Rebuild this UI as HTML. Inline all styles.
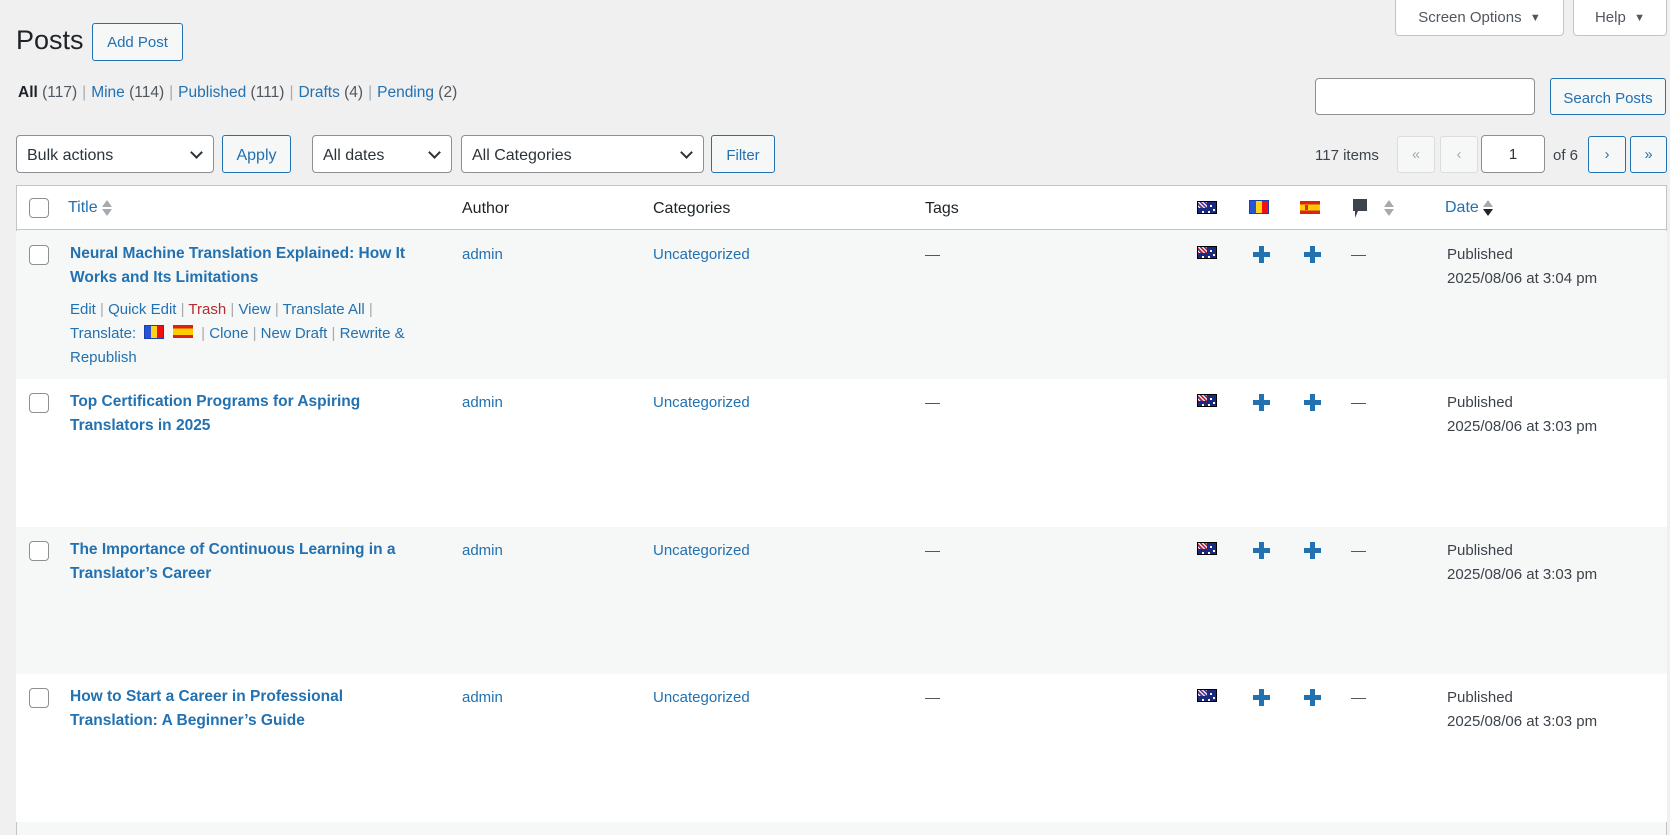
<!DOCTYPE html>
<html><head><meta charset="utf-8"><style>
*{box-sizing:border-box;margin:0;padding:0}
body{width:1670px;height:835px;overflow:hidden;background:#f0f0f1;font-family:"Liberation Sans",sans-serif;font-size:14px;color:#3c434a;position:relative}
.a{position:absolute;white-space:nowrap}
a,.l{color:#2271b1;text-decoration:none}
.btn{position:absolute;border:1px solid #2271b1;color:#2271b1;background:#f6f7f7;border-radius:3px;display:flex;align-items:center;justify-content:center;font-size:14.5px}
.sel{position:absolute;border:1px solid #8c8f94;background:#fff;border-radius:4px;font-size:16px;color:#2c3338;padding-left:10px;padding-top:3px;display:flex;align-items:center}
.sel:after{content:"";position:absolute;right:12px;top:12px;width:7px;height:7px;border-right:2px solid #2c3338;border-bottom:2px solid #2c3338;transform:rotate(45deg)}
.cb{position:absolute;width:20px;height:20px;border:1px solid #8c8f94;border-radius:4px;background:#fff}
.row{position:absolute;left:16px;width:1651px;height:148px}
.au{position:absolute;width:20px;height:13px;background:#1a2a80;border:1px solid #000}
.au:before{content:"";position:absolute;left:0;top:0;width:9px;height:6px;background:repeating-linear-gradient(45deg,#c33 0 1px,#fff 1px 2px,#24b 2px 3px)}
.au:after{content:"";position:absolute;left:12px;top:3px;width:2px;height:2px;background:#fff;box-shadow:3px 4px 0 #fff,-2px 6px 0 #fff,-8px 6px 0 #fff}
.ro{position:absolute;width:20px;height:14px;border:1px solid #1a3fae;background:linear-gradient(90deg,#2a52d6 0 33%,#fcd116 33% 66%,#e11 66%)}
.es{position:absolute;width:20px;height:13px;background:linear-gradient(#d21 0 25%,#fc0 25% 75%,#d21 75%)}
.es:after{content:"";position:absolute;left:5px;top:4px;width:3px;height:5px;background:#c33}
.plus{position:absolute;width:17px;height:17px}
.plus:before{content:"";position:absolute;left:6px;top:0;width:5px;height:17px;background:#2271b1}
.plus:after{content:"";position:absolute;left:0;top:6px;width:17px;height:5px;background:#2271b1}
.dash{position:absolute;width:15px;height:1px;background:#50575e}
.t{font-weight:bold;font-size:15.5px;line-height:24px;color:#2271b1}
.sort{display:inline-block;vertical-align:middle;margin-left:4px;width:10px;height:18px;position:relative}
.sort:before{content:"";position:absolute;top:1px;left:0;border:5px solid transparent;border-bottom:7px solid #a7aaad;border-top:0}
.sort:after{content:"";position:absolute;top:10px;left:0;border:5px solid transparent;border-top:7px solid #a7aaad;border-bottom:0}
.sort.d:after{border-top-color:#1d2327}
.sep{color:#a7aaad;padding:0 5px}
</style></head><body>
<div class="a" style="left:1395px;top:-1px;width:169px;height:37px;background:#fff;border:1px solid #c3c4c7;border-radius:0 0 4px 4px;display:flex;align-items:center;justify-content:center;font-size:15px;color:#50575e">Screen Options&nbsp;&nbsp;<span style="font-size:11px">▼</span></div>
<div class="a" style="left:1573px;top:-1px;width:94px;height:37px;background:#fff;border:1px solid #c3c4c7;border-radius:0 0 4px 4px;display:flex;align-items:center;justify-content:center;font-size:15px;color:#50575e">Help&nbsp;&nbsp;<span style="font-size:11px">▼</span></div>

<div class="a" style="left:16px;top:25px;font-size:27px;color:#1d2327">Posts</div>
<div class="btn" style="left:92px;top:23px;width:91px;height:38px;font-size:15px">Add Post</div>

<div class="a" style="left:18px;top:84px;font-size:15.5px;color:#50575e"><b style="color:#1d2327;font-weight:600">All</b> (117)<span class="sep">|</span><span class="l">Mine</span> (114)<span class="sep">|</span><span class="l">Published</span> (111)<span class="sep">|</span><span class="l">Drafts</span> (4)<span class="sep">|</span><span class="l">Pending</span> (2)</div>

<div class="a" style="left:1315px;top:78px;width:220px;height:37px;background:#fff;border:1px solid #8c8f94;border-radius:4px"></div>
<div class="btn" style="left:1550px;top:78px;width:116px;height:37px;padding-top:3px;font-size:15px">Search Posts</div>

<div class="sel" style="left:16px;top:135px;width:198px;height:38px">Bulk actions</div>
<div class="btn" style="left:222px;top:135px;width:69px;height:38px;font-size:16px;padding-top:3px">Apply</div>
<div class="sel" style="left:312px;top:135px;width:140px;height:38px">All dates</div>
<div class="sel" style="left:461px;top:135px;width:243px;height:38px">All Categories</div>
<div class="btn" style="left:711px;top:135px;width:64px;height:38px;padding-top:2px;font-size:15px">Filter</div>

<div class="a" style="left:1315px;top:147px;font-size:15px">117 items</div>
<div class="btn" style="left:1397px;top:136px;width:38px;height:37px;border-color:#dcdcde;color:#a7aaad">«</div>
<div class="btn" style="left:1440px;top:136px;width:38px;height:37px;border-color:#dcdcde;color:#a7aaad">‹</div>
<div class="a" style="left:1481px;top:135px;width:64px;height:38px;background:#fff;border:1px solid #8c8f94;border-radius:4px;text-align:center;line-height:38px;font-size:15px;color:#2c3338">1</div>
<div class="a" style="left:1553px;top:147px;font-size:15px">of 6</div>
<div class="btn" style="left:1588px;top:136px;width:38px;height:37px">›</div>
<div class="btn" style="left:1630px;top:136px;width:37px;height:37px">»</div>

<div class="a" style="left:16px;top:185px;width:1651px;height:650px;background:#f6f7f7;border:1px solid #c3c4c7;border-bottom:0"></div>
<div class="a" style="left:16px;top:185px;width:1651px;height:45px;background:#fff;border:1px solid #c3c4c7"></div>
<div class="cb" style="left:29px;top:198px"></div>
<div class="a l" style="left:68px;top:199px;font-size:16px">Title<span class="sort"></span></div>
<div class="a" style="left:462px;top:200px;font-size:16px;color:#1d2327">Author</div>
<div class="a" style="left:653px;top:200px;font-size:16px;color:#1d2327">Categories</div>
<div class="a" style="left:925px;top:200px;font-size:16px;color:#1d2327">Tags</div>
<div class="au" style="left:1197px;top:201px"></div>
<div class="ro" style="left:1249px;top:200px"></div>
<div class="es" style="left:1300px;top:201px"></div>
<svg class="a" style="left:1351px;top:198px" width="18" height="22"><path d="M2 1h14v12h-9l-3 7v-7h-2z" fill="#3c434a"/></svg>
<span class="sort a" style="left:1380px;top:199px"></span>
<div class="a l" style="left:1445px;top:199px;font-size:16px">Date<span class="sort d"></span></div>

<div class="row" style="top:231px;background:#f6f7f7"></div>
<div class="row" style="top:379px;background:#fff"></div>
<div class="row" style="top:527px;background:#f6f7f7"></div>
<div class="row" style="top:674px;background:#fff"></div>

<div class="cb" style="left:29px;top:245px"></div>
<div class="a t" style="left:70px;top:242px">Neural Machine Translation Explained: How It<br>Works and Its Limitations</div>
<div class="a" style="left:70px;top:298px;font-size:15px;line-height:24px;color:#a7aaad"><span class="l">Edit</span> | <span class="l">Quick Edit</span> | <span style="color:#b32d2e">Trash</span> | <span class="l">View</span> | <span class="l">Translate All</span> |<br><span class="l">Translate:</span> &nbsp;<span style="display:inline-block;width:20px;height:14px;vertical-align:-1px;border:1px solid #1a3fae;background:linear-gradient(90deg,#2a52d6 0 33%,#fcd116 33% 66%,#e11 66%)"></span>&nbsp;&nbsp;<span style="display:inline-block;width:20px;height:13px;vertical-align:0;background:linear-gradient(#d21 0 25%,#fc0 25% 75%,#d21 75%)"></span>&nbsp; | <span class="l">Clone</span> | <span class="l">New Draft</span> | <span class="l">Rewrite &amp;</span><br><span class="l">Republish</span></div>

<div class="cb" style="left:29px;top:393px"></div>
<div class="a t" style="left:70px;top:390px">Top Certification Programs for Aspiring<br>Translators in 2025</div>
<div class="cb" style="left:29px;top:541px"></div>
<div class="a t" style="left:70px;top:538px">The Importance of Continuous Learning in a<br>Translator’s Career</div>
<div class="cb" style="left:29px;top:688px"></div>
<div class="a t" style="left:70px;top:685px">How to Start a Career in Professional<br>Translation: A Beginner’s Guide</div>

<div id="cols"></div>
<script>
var tops=[241,389,537,684],times=["3:04","3:03","3:03","3:03"],h="";
tops.forEach(function(t,i){
h+='<div class="a l" style="left:462px;top:'+(t+2)+'px;font-size:15px;line-height:24px">admin</div>';
h+='<div class="a l" style="left:653px;top:'+(t+2)+'px;font-size:15px;line-height:24px">Uncategorized</div>';
h+='<div class="dash" style="left:925px;top:'+(t+14)+'px"></div>';
h+='<div class="au" style="left:1197px;top:'+(t+5)+'px"></div>';
h+='<div class="plus" style="left:1253px;top:'+(t+5)+'px"></div>';
h+='<div class="plus" style="left:1304px;top:'+(t+5)+'px"></div>';
h+='<div class="dash" style="left:1351px;top:'+(t+14)+'px"></div>';
h+='<div class="a" style="left:1447px;top:'+(t+2)+'px;font-size:15px;line-height:24px">Published<br>2025/08/06 at '+times[i]+' pm</div>';
});
document.getElementById("cols").innerHTML=h;
</script>
</body></html>
